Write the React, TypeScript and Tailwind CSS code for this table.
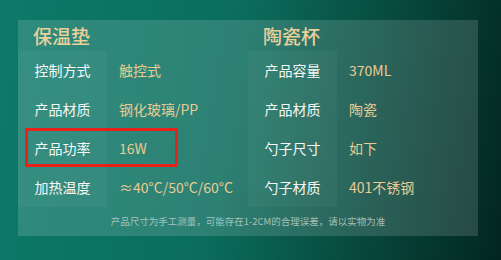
import React from 'react';

const font = { fontFamily: '"Noto Sans CJK SC", "Noto Sans", sans-serif' };

interface Spec {
  label: string;
  value: string;
}

const Column: React.FC<{ title: string; specs: Spec[] }> = ({ title, specs }) => (
  <div className="flex flex-col">
    <div className="h-[31px] pl-[15px] flex items-center text-[19px] font-medium text-[#ead09b] leading-none">
      {title}
    </div>
    {specs.map((s, i) => (
      <div key={i} className="h-[39px] flex">
        <div className="w-[89px] bg-white/[0.035] flex items-center justify-center text-[14px] text-[#f6f8f7]">
          {s.label}
        </div>
        <div className="flex-1 pl-[12px] flex items-center text-[14px] text-[#e8cc94]">
          {s.value}
        </div>
      </div>
    ))}
  </div>
);

export default function App() {
  const left: Spec[] = [
    { label: '控制方式', value: '触控式' },
    { label: '产品材质', value: '钢化玻璃/PP' },
    { label: '产品功率', value: '16W' },
    { label: '加热温度', value: '≈40°C/50°C/60°C' },
  ];
  const right: Spec[] = [
    { label: '产品容量', value: '370ML' },
    { label: '产品材质', value: '陶瓷' },
    { label: '勺子尺寸', value: '如下' },
    { label: '勺子材质', value: '401不锈钢' },
  ];

  return (
    <div
      className="w-[501px] h-[260px] overflow-hidden pt-[20px] pl-[18px] bg-[linear-gradient(100deg,#0d7a69_0%,#0b6d5d_45%,#064036_80%,#02261f_100%)]"
      style={font}
    >
      <div className="relative w-[460px] h-[216px] bg-white/[0.14] flex flex-col">
        <div className="grid grid-cols-2">
          <Column title="保温垫" specs={left} />
          <Column title="陶瓷杯" specs={right} />
        </div>
        <div className="flex-1 flex items-center justify-center text-[9.5px] text-[#c4d6d0]/80">
          产品尺寸为手工测量，可能存在1-2CM的合理误差，请以实物为准
        </div>
        {/* highlight box */}
        <div className="absolute left-[7px] top-[108px] w-[153px] h-[39px] border-[3px] border-[#e8221b]" />
      </div>
    </div>
  );
}
